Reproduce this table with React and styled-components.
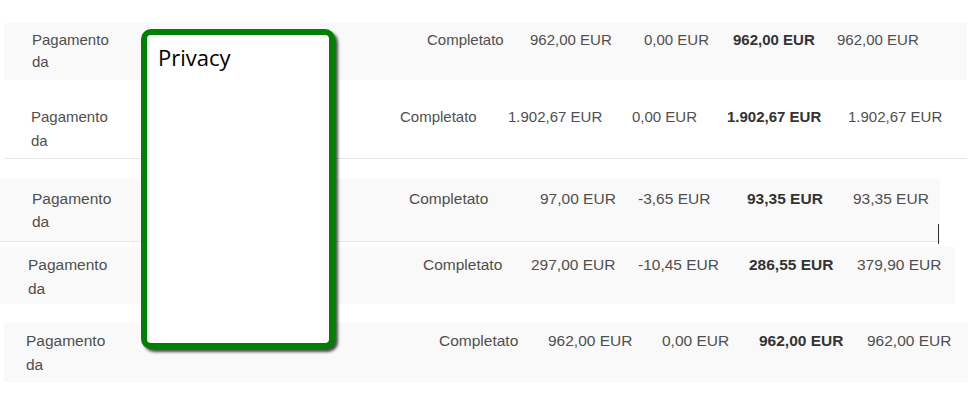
import React from "react";
import styled, { createGlobalStyle } from "styled-components";

const GlobalStyle = createGlobalStyle`
  body {
    margin: 0;
    background: #fff;
    font-family: "Liberation Sans", Arial, sans-serif;
  }
`;

const Page = styled.div`
  position: relative;
  width: 975px;
  height: 396px;
  overflow: hidden;
  display: flex;
  flex-direction: column;
`;

const Row = styled.div`
  position: relative;
  display: grid;
  grid-template-columns: ${(p) => p.$cols};
  align-items: start;
  box-sizing: border-box;
  margin-top: ${(p) => p.$mt}px;
  margin-left: ${(p) => p.$ml}px;
  width: ${(p) => p.$w}px;
  height: ${(p) => p.$h}px;
  padding-top: ${(p) => p.$pt}px;
  background: ${(p) => (p.$striped ? "#f9f9f9" : "#fff")};
  border-bottom: ${(p) => (p.$border ? "1px solid #e6e6e6" : "none")};
  font-size: ${(p) => p.$fs}px;
  line-height: ${(p) => p.$lh}px;
  color: #4f4f4f;
`;

const Label = styled.div`
  padding-left: ${(p) => p.$pad}px;
  width: 90px;
`;

const Cell = styled.div`
  white-space: nowrap;
  font-weight: ${(p) => (p.$bold ? 700 : 400)};
  color: ${(p) => (p.$bold ? "#333" : "#4f4f4f")};
`;

const Caret = styled.div`
  position: absolute;
  left: 938px;
  top: 45px;
  width: 1px;
  height: 20px;
  background: #333;
`;

const Popup = styled.div`
  position: absolute;
  left: 141px;
  top: 29px;
  width: 194px;
  height: 320px;
  box-sizing: border-box;
  border: 6px solid #008000;
  border-radius: 10px;
  background: #fff;
  box-shadow: 3px 3px 3px rgba(0, 0, 0, 0.7);
  padding: 7px 0 0 11px;
`;

const PopupTitle = styled.div`
  font-family: "Open Sans", "Noto Sans", sans-serif;
  font-size: 22px;
  line-height: 30px;
  color: #000;
`;

const rows = [
  {
    mt: 23, ml: 4, w: 963, h: 57, pt: 6, lh: 22, fs: 15, pad: 28, striped: true,
    cols: "423px 103px 114px 89px 104px 1fr",
    vals: ["Completato", "962,00 EUR", "0,00 EUR", "962,00 EUR", "962,00 EUR"],
  },
  {
    mt: 0, ml: 4, w: 963, h: 79, pt: 25, lh: 24, fs: 15, pad: 27, border: true,
    cols: "396px 108px 124px 95px 121px 1fr",
    vals: ["Completato", "1.902,67 EUR", "0,00 EUR", "1.902,67 EUR", "1.902,67 EUR"],
  },
  {
    mt: 20, ml: 0, w: 940, h: 63, pt: 8, lh: 23, fs: 15.5, pad: 32, striped: true, border: true, caret: true,
    cols: "409px 131px 98px 109px 106px 1fr",
    vals: ["Completato", "97,00 EUR", "-3,65 EUR", "93,35 EUR", "93,35 EUR"],
  },
  {
    mt: 5, ml: 0, w: 955, h: 57, pt: 6, lh: 24, fs: 15.5, pad: 28, striped: true,
    cols: "423px 108px 107px 111px 108px 1fr",
    vals: ["Completato", "297,00 EUR", "-10,45 EUR", "286,55 EUR", "379,90 EUR"],
  },
  {
    mt: 19, ml: 4, w: 964, h: 59, pt: 6, lh: 24, fs: 15.5, pad: 22, striped: true,
    cols: "435px 109px 114px 97px 108px 1fr",
    vals: ["Completato", "962,00 EUR", "0,00 EUR", "962,00 EUR", "962,00 EUR"],
  },
];

const App = () => {
  return (
    <>
      <GlobalStyle />
      <Page>
        {rows.map((r, i) => (
          <Row
            key={i}
            $cols={r.cols}
            $mt={r.mt}
            $ml={r.ml}
            $w={r.w}
            $h={r.h}
            $pt={r.pt}
            $lh={r.lh}
            $fs={r.fs}
            $striped={r.striped}
            $border={r.border}
          >
            <Label $pad={r.pad}>Pagamento da</Label>
            {r.vals.map((v, j) => (
              <Cell key={j} $bold={j === 3}>
                {v}
              </Cell>
            ))}
            {r.caret && <Caret />}
          </Row>
        ))}
        <Popup>
          <PopupTitle>Privacy</PopupTitle>
        </Popup>
      </Page>
    </>
  );
};

export default App;
